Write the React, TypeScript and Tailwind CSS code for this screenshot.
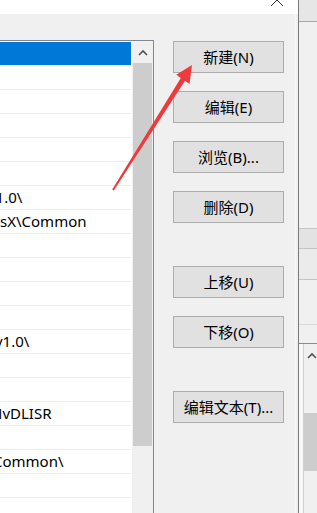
import React from "react";

const rows: { text?: string; ml?: string; selected?: boolean }[] = [
  { selected: true },
  {},
  {},
  {},
  {},
  {},
  { text: "\\1.0\\", ml: "-ml-[10px]" },
  { text: "sX\\Common" },
  {},
  {},
  {},
  {},
  { text: "v1.0\\", ml: "-ml-[5px]" },
  {},
  {},
  { text: "NvDLISR", ml: "-ml-[9px]" },
  {},
  { text: "Common\\", ml: "-ml-[7px]" },
  {},
  {},
];

const buttons: { label: string; mt: string }[] = [
  { label: "新建(N)", mt: "mt-0" },
  { label: "编辑(E)", mt: "mt-[18px]" },
  { label: "浏览(B)...", mt: "mt-[18px]" },
  { label: "删除(D)", mt: "mt-[18px]" },
  { label: "上移(U)", mt: "mt-[43px]" },
  { label: "下移(O)", mt: "mt-[18px]" },
  { label: "编辑文本(T)...", mt: "mt-[43px]" },
];

export default function App() {
  return (
    <div className="relative w-[317px] h-[513px] overflow-hidden flex bg-[#f0f0f0] font-['Noto_Sans','Noto_Sans_CJK_SC',sans-serif] text-black">
      {/* main dialog */}
      <div className="w-[302px] flex flex-col">
        {/* title strip */}
        <div className="h-[14px] bg-white flex justify-end pr-[14px] overflow-hidden shrink-0">
          <svg width="14" height="14" viewBox="0 0 14 14" className="-mt-[7px] shrink-0">
            <path d="M1 1 L13 13 M13 1 L1 13" stroke="#333" strokeWidth="1" fill="none" />
          </svg>
        </div>
        <div className="flex flex-1 min-h-0">
          {/* list box */}
          <div className="mt-[26px] w-[154px] shrink-0 border-t border-r border-[#828790] bg-white flex">
            <div className="w-[131px] pt-[1px] flex flex-col overflow-hidden">
              {rows.map((r, i) => (
                <div
                  key={i}
                  className={
                    "h-[24px] shrink-0 border-b border-[#eeeeee] overflow-hidden whitespace-nowrap text-[15px] leading-[23px] " +
                    (r.selected ? "bg-[#0078d7]" : "bg-white")
                  }
                >
                  {r.text ? <div className={r.ml ?? ""}>{r.text}</div> : null}
                </div>
              ))}
            </div>
            <div className="w-[1px] bg-white" />
            <div className="w-[21px] bg-[#f0f0f0] flex flex-col">
              <div className="h-[22px] flex justify-center items-start pt-[8px]">
                <svg width="10" height="7" viewBox="0 0 10 7">
                  <polyline points="1,6 5,2 9,6" fill="none" stroke="#505050" strokeWidth="1.6" />
                </svg>
              </div>
              <div className="h-[383px] mx-[1px] bg-[#cdcdcd]" />
            </div>
          </div>
          {/* buttons */}
          <div className="ml-[19px] mt-[27px] w-[111px] flex flex-col shrink-0">
            {buttons.map((b) => (
              <button
                key={b.label}
                className={
                  "h-[32px] w-full bg-[#e1e1e1] border border-[#adadad] text-[15px] leading-none flex items-center justify-center " +
                  b.mt
                }
              >
                {b.label}
              </button>
            ))}
          </div>
          <div className="flex-1" />
          <div className="w-[1px] bg-[#f8f8f8]" />
          <div className="w-[2px]" />
        </div>
      </div>
      {/* divider */}
      <div className="w-[1px] bg-[#7a7a7a]" />
      {/* neighbouring window strip */}
      <div className="flex-1 flex flex-col">
        <div className="h-[21px] bg-[#e6e6e6]" />
        <div className="h-[1px] bg-[#a8a8a8]" />
        <div className="h-[206px] bg-[#f0f0f0]" />
        <div className="h-[1px] bg-[#c4c4c4]" />
        <div className="h-[19px] bg-[#e3e3e3]" />
        <div className="h-[1px] bg-[#c4c4c4]" />
        <div className="h-[30px] bg-[#ebebeb]" />
        <div className="h-[1px] bg-[#c4c4c4]" />
        <div className="h-[44px] bg-[#f0f0f0]" />
        <div className="h-[1px] bg-[#d8d8d8]" />
        <div className="h-[18px] bg-[#f0f0f0]" />
        <div className="h-[1px] bg-[#8a8a8a]" />
        <div className="flex-1 flex">
          <div className="w-[4px] bg-[#f7f7f7]" />
          <div className="w-[1px] bg-[#d0d0d0]" />
          <div className="flex-1 bg-[#f0f0f0] flex flex-col overflow-hidden">
            <div className="h-[21px] pt-[8px] pl-[3px]">
              <svg width="10" height="7" viewBox="0 0 10 7">
                <polyline points="1,6 5,2 9,6" fill="none" stroke="#505050" strokeWidth="1.6" />
              </svg>
            </div>
            <div className="h-[48px]" />
            <div className="h-[58px] bg-[#cdcdcd]" />
          </div>
        </div>
      </div>
      {/* red annotation arrow */}
      <svg
        className="absolute inset-0 pointer-events-none"
        width="317"
        height="513"
        viewBox="0 0 317 513"
      >
        <polygon
          points="113.8,190.5 185,80.7 189.5,84 192,65 176.3,74.8 180.8,78.1 112.2,189.5"
          fill="#ee3a3a"
        />
      </svg>
    </div>
  );
}
